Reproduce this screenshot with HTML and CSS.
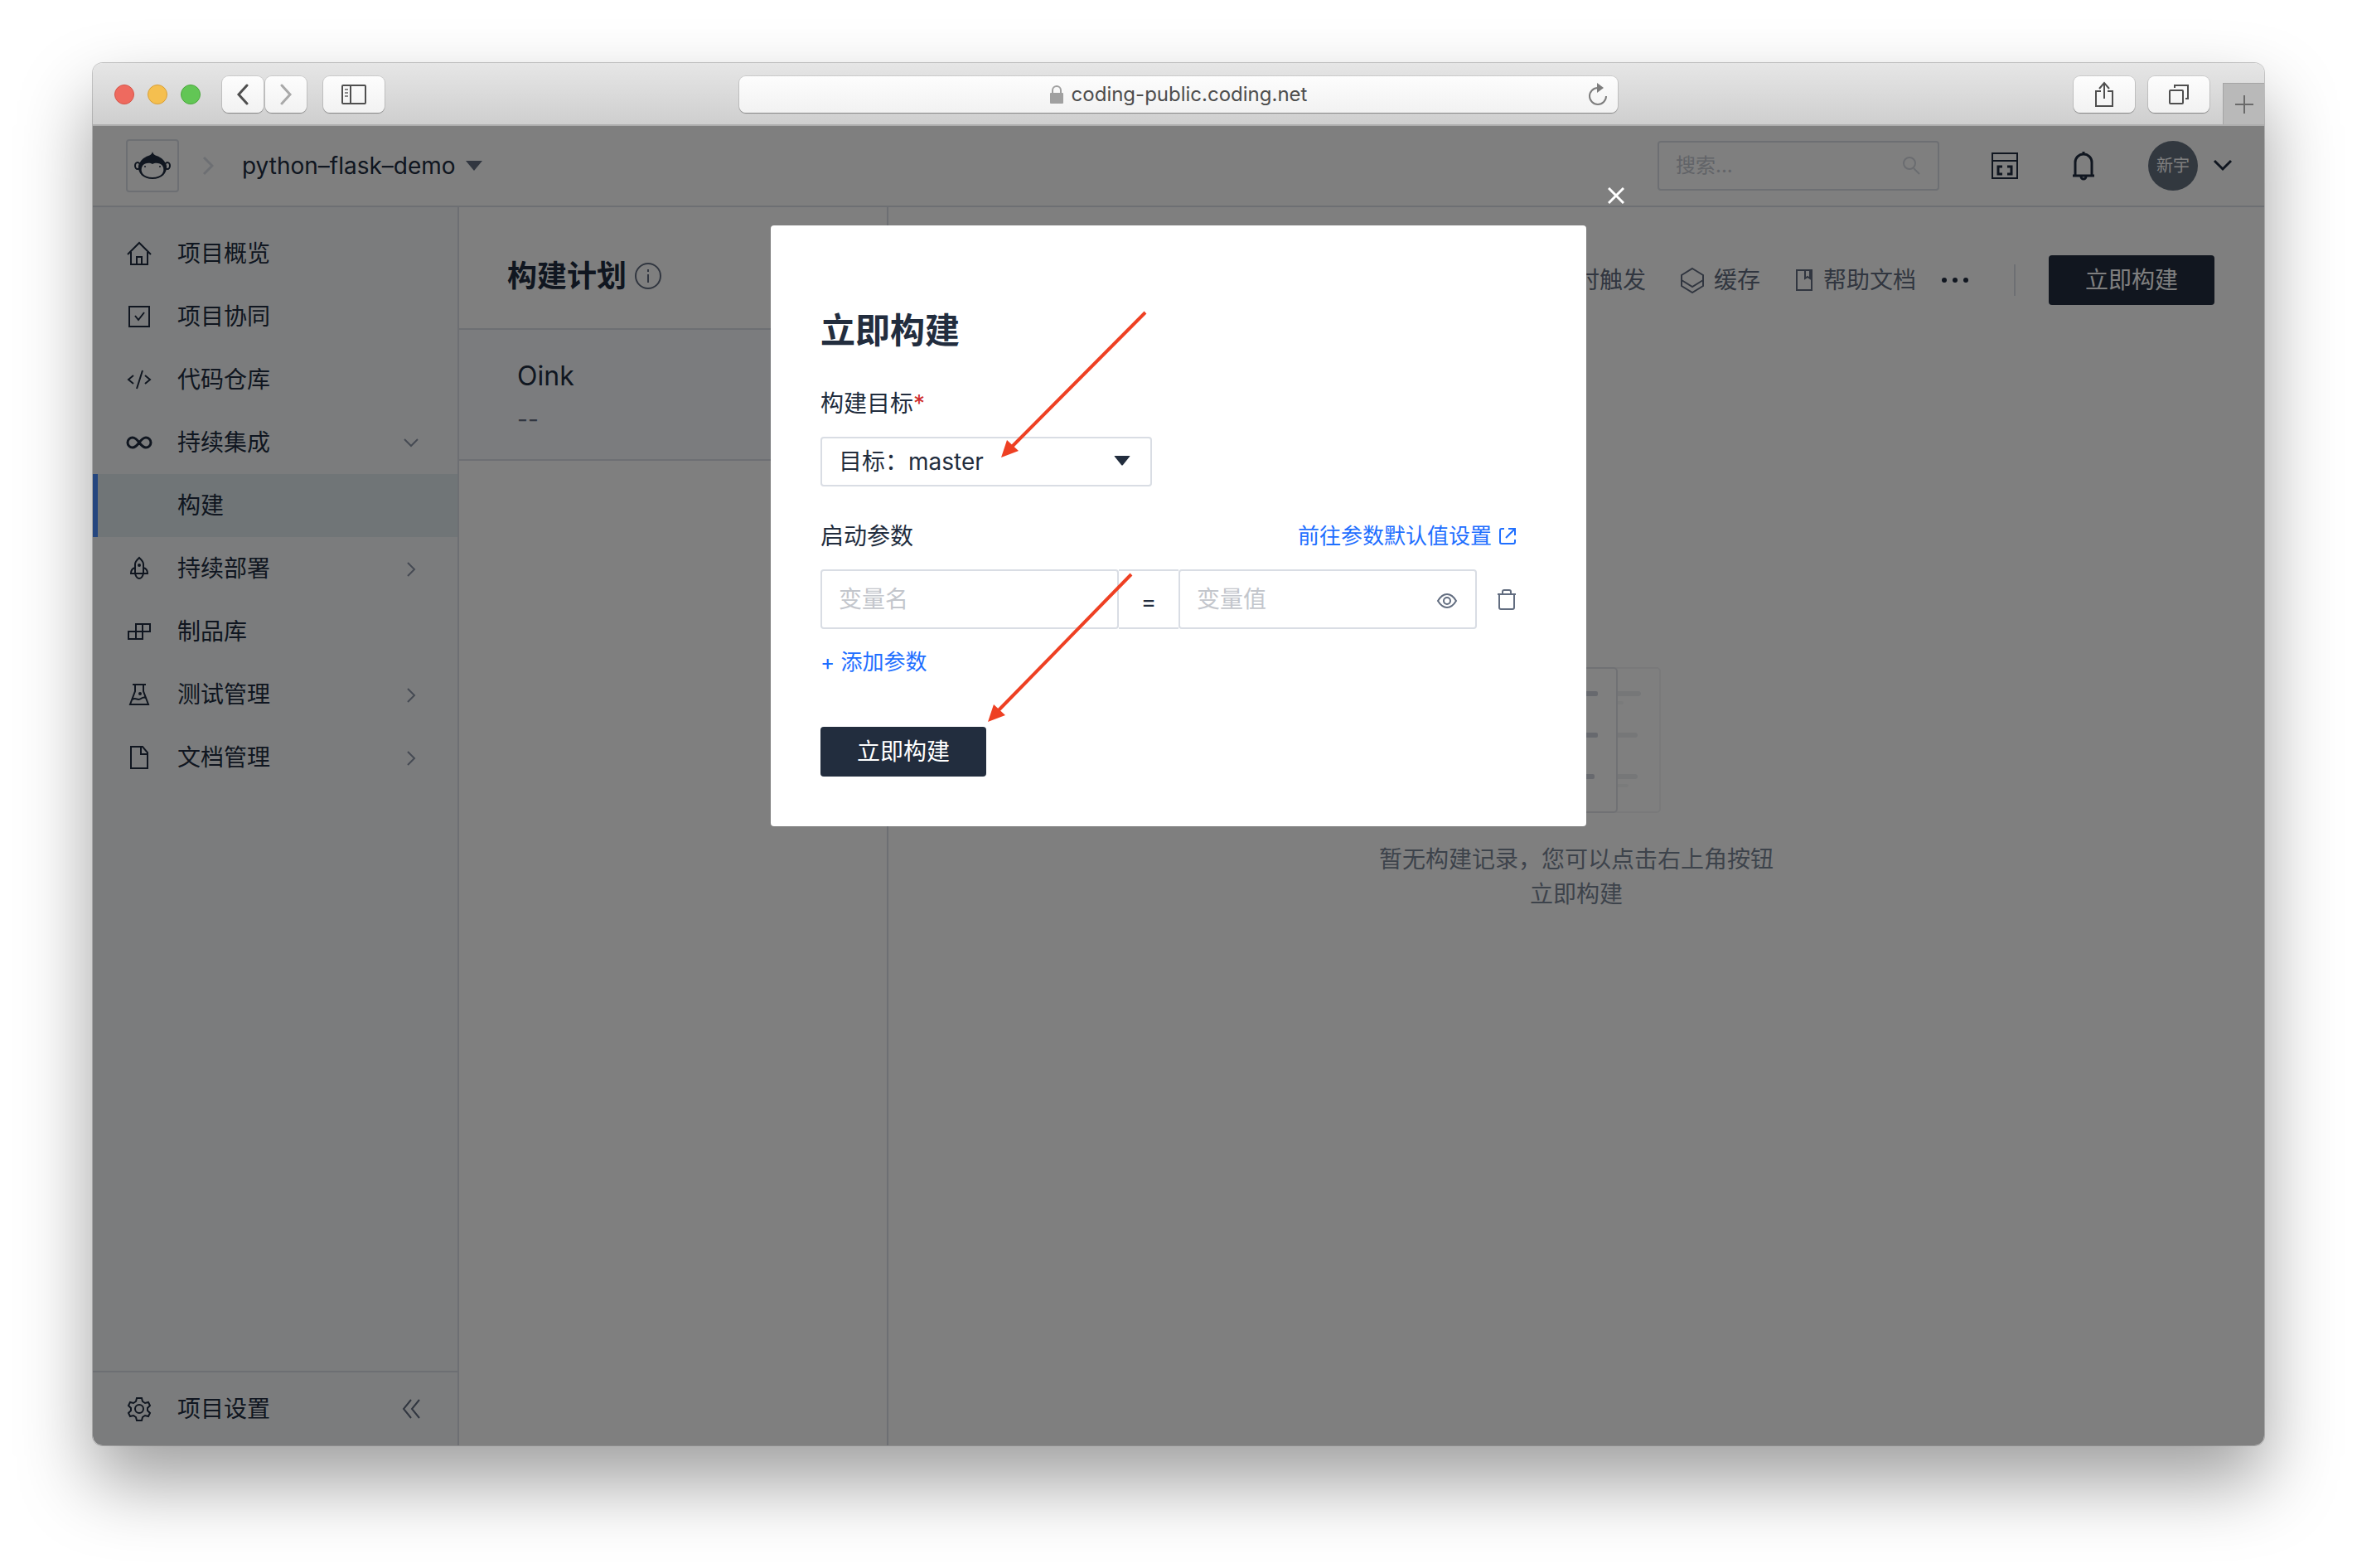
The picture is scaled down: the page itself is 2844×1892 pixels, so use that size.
FILE: index.html
```html
<!DOCTYPE html>
<html lang="zh-CN">
<head>
    <meta charset="UTF-8">
    <meta name="viewport" content="width=device-width, initial-scale=1.0">
    <title>立即构建</title>
    <link rel="stylesheet" href="styles.css">
</head>
<body>
    <div class="window">
        <div class="toolbar">
            <div class="toolbar-left">
                <span class="light red"></span>
                <span class="light yellow"></span>
                <span class="light green"></span>
                <div class="history">
                    <button type="button" class="tool" aria-label="Back">
                        <svg width="16" height="26" viewBox="0 0 16 26"><path d="M13 2L3 13l10 11" fill="none" stroke="#4f4f4f" stroke-width="3" stroke-linecap="round"/></svg>
                    </button>
                    <button type="button" class="tool" aria-label="Forward">
                        <svg width="16" height="26" viewBox="0 0 16 26"><path d="M3 2l10 11L3 24" fill="none" stroke="#a9a9a9" stroke-width="3" stroke-linecap="round"/></svg>
                    </button>
                </div>
                <button type="button" class="tool wide" aria-label="Sidebar">
                    <svg width="32" height="26" viewBox="0 0 32 26" fill="none" stroke="#4f4f4f" stroke-width="2"><rect x="2" y="2" width="28" height="22" rx="1"/><path d="M12 2v22"/><path d="M5 7h4M5 11h4M5 15h4" stroke="#8a8a8a"/></svg>
                </button>
            </div>
            <div class="address">
                <svg width="16" height="22" viewBox="0 0 16 22"><rect y="9" width="16" height="13" rx="1" fill="#a0a0a0"/><path d="M3 10V6a5 5 0 0 1 10 0v4" fill="none" stroke="#a0a0a0" stroke-width="2"/></svg>
                <span>coding-public.coding.net</span>
                <button type="button" class="reload" aria-label="Reload">
                    <svg width="24" height="28" viewBox="0 0 24 28"><path d="M12 6a10 10 0 1 0 10 10" fill="none" stroke="#7d7d7d" stroke-width="2"/><path d="M11 0l8 6-8 6z" fill="#7d7d7d"/></svg>
                </button>
            </div>
            <div class="toolbar-right">
                <button type="button" class="tool wide" aria-label="Share">
                    <svg width="24" height="32" viewBox="0 0 24 32" fill="none" stroke="#4f4f4f" stroke-width="2"><path d="M8 12H2v18h20V12h-6M12 21V3M6 9l6-7 6 7"/></svg>
                </button>
                <button type="button" class="tool wide" aria-label="Tabs">
                    <svg width="26" height="26" viewBox="0 0 26 26" fill="none" stroke="#4f4f4f" stroke-width="2"><rect x="2" y="8" width="16" height="16" rx="1"/><path d="M8 5V2h16v16h-3"/></svg>
                </button>
                <button type="button" class="new-tab" aria-label="New tab">
                    <svg width="22" height="22" viewBox="0 0 22 22"><path d="M11 0v22M0 11h22" stroke="#6a6a6a" stroke-width="2"/></svg>
                </button>
            </div>
        </div>

        <div class="app">
            <header class="header">
                <a href="#" class="logo" aria-label="CODING">
                    <svg width="44" height="34" viewBox="10 15 44 34">
                        <g fill="none" stroke="#202d40" stroke-width="2"><ellipse cx="14" cy="32" rx="3" ry="4"/><ellipse cx="50" cy="32" rx="3" ry="4"/></g>
                        <path fill="#202d40" d="M32 15c1 3 2 4 5 5 6 2 10 6 12 12 1 9-6 16-17 16s-18-7-17-16c2-6 6-10 12-12 3-1 4-2 5-5z"/>
                        <path fill="#fff" d="M32 30c3-2 9-2 12 2 4 7-1 14-12 14s-16-7-12-14c3-4 9-4 12-2z"/>
                        <circle cx="23" cy="33" r="1" fill="#202d40"/><circle cx="41" cy="33" r="1" fill="#202d40"/>
                    </svg>
                </a>
                <svg class="crumb" width="14" height="24" viewBox="0 0 14 24"><path d="M2 2l10 10L2 22" fill="none" stroke="#dadfe6" stroke-width="3"/></svg>
                <button type="button" class="project">python–flask–demo
                    <svg width="20" height="12" viewBox="0 0 20 12"><path d="M0 0h20L10 12z" fill="#626d80"/></svg>
                </button>
                <label class="search">
                    <input type="text" placeholder="搜索..." aria-label="搜索">
                    <svg width="24" height="24" viewBox="0 0 24 24" fill="none" stroke="#d5d9e0" stroke-width="2"><circle cx="10" cy="9" r="7"/><path d="M15 15l7 7"/></svg>
                </label>
                <button type="button" class="icon-button" aria-label="工作台">
                    <svg width="34" height="34" viewBox="0 0 34 34" fill="none" stroke="#202d40" stroke-width="2"><path d="M2 2h30v30H2zM2 11h30"/><path d="M14 18h-5v9h5M20 18h5v9h-5" stroke-width="3"/></svg>
                </button>
                <button type="button" class="icon-button" aria-label="通知">
                    <svg width="28" height="36" viewBox="0 0 28 36" fill="none" stroke="#202d40" stroke-width="3"><path d="M4 30V14a10 10 0 0 1 20 0v16M1 30h26M14 4V1M11 31a3 3 0 0 0 6 0"/></svg>
                </button>
                <button type="button" class="user">
                    <span class="avatar">新宇</span>
                    <svg width="24" height="16" viewBox="0 0 24 16"><path d="M2 2l10 10L22 2" fill="none" stroke="#202d40" stroke-width="3"/></svg>
                </button>
            </header>

            <div class="body">
                <aside class="sidebar">
                    <nav class="menu">
                        <a href="#" class="item">
                            <svg class="icon" viewBox="0 0 32 32"><path d="M2 17L16 3l14 14M6 14v15h20V14M13 29v-9h6v9"/></svg>
                            <span>项目概览</span>
                        </a>
                        <a href="#" class="item">
                            <svg class="icon" viewBox="0 0 32 32"><path d="M4 4h24v24H4zM11 15l4 5 7-9"/></svg>
                            <span>项目协同</span>
                        </a>
                        <a href="#" class="item">
                            <svg class="icon" viewBox="0 0 32 32"><path d="M9 11l-6 5 6 5M23 11l6 5-6 5M20 5l-7 22"/></svg>
                            <span>代码仓库</span>
                        </a>
                        <a href="#" class="item">
                            <svg class="icon" viewBox="0 0 32 32"><path stroke-width="3" d="M16 16c-3-4-5-6-8-6a6 6 0 0 0 0 12c3 0 5-2 8-6s5-6 8-6a6 6 0 0 1 0 12c-3 0-5-2-8-6z"/></svg>
                            <span>持续集成</span>
                            <svg class="arrow" viewBox="0 0 20 20"><path d="M2 6l8 8 8-8"/></svg>
                        </a>
                        <a href="#" class="item active"><span>构建</span></a>
                        <a href="#" class="item">
                            <svg class="icon" viewBox="0 0 32 32"><path d="M11 22V11c0-4 3-6 5-8 2 2 5 4 5 8v11zM11 15c-4 1-5 4-5 7h5M21 15c4 1 5 4 5 7h-5M11 22c1 4 3 6 5 6s4-2 5-6"/><circle cx="16" cy="12" r="1"/></svg>
                            <span>持续部署</span>
                            <svg class="arrow" viewBox="0 0 20 20"><path d="M6 3l8 8-8 8"/></svg>
                        </a>
                        <a href="#" class="item">
                            <svg class="icon" viewBox="0 0 32 32"><path d="M12 7h17v9H12zM3 16h17v9H3zM20 7v9M12 16v9"/></svg>
                            <span>制品库</span>
                        </a>
                        <a href="#" class="item">
                            <svg class="icon" viewBox="0 0 32 32"><path d="M8 4h16M11 4v8L5 28h22l-6-16V4M8 22c4-3 6 2 10-1 3-2 4-2 6-1"/><circle cx="17" cy="15" r="1"/></svg>
                            <span>测试管理</span>
                            <svg class="arrow" viewBox="0 0 20 20"><path d="M6 3l8 8-8 8"/></svg>
                        </a>
                        <a href="#" class="item">
                            <svg class="icon" viewBox="0 0 32 32"><path d="M6 3h14l6 7v19H6zM18 3v9h8"/></svg>
                            <span>文档管理</span>
                            <svg class="arrow" viewBox="0 0 20 20"><path d="M6 3l8 8-8 8"/></svg>
                        </a>
                    </nav>
                    <div class="settings">
                        <a href="#" class="item">
                            <svg class="icon" viewBox="0 0 32 32"><path d="M13 3h6l1 4 3 2 4-1 2 4-3 3v3l3 3-2 4-4-1-3 2-1 4h-6l-1-4-3-2-4 1-2-4 3-3v-3l-3-3 2-4 4 1 3-2z"/><circle cx="16" cy="16" r="5"/></svg>
                            <span>项目设置</span>
                        </a>
                        <button type="button" class="collapse" aria-label="收起">
                            <svg width="24" height="24" viewBox="0 0 24 24"><path d="M12 1L3 12l9 11M22 1l-9 11 9 11" fill="none" stroke="#626d80" stroke-width="2"/></svg>
                        </button>
                    </div>
                </aside>

                <section class="plans">
                    <div class="plans-head">
                        <h2>构建计划</h2>
                        <svg width="32" height="32" viewBox="0 0 32 32" fill="none" stroke="#626d80" stroke-width="2"><circle cx="16" cy="16" r="15"/><path d="M16 14v10M16 8v3"/></svg>
                    </div>
                    <a href="#" class="plan">
                        <span class="plan-name">Oink</span>
                        <span class="plan-state">--</span>
                    </a>
                </section>

                <main class="main">
                    <div class="actions">
                        <a href="#" class="action">
                            <svg width="28" height="32" viewBox="0 0 28 32" fill="none" stroke="#626d80" stroke-width="2"><circle cx="14" cy="16" r="12"/><path d="M14 9v7h6"/></svg>
                            定时触发
                        </a>
                        <a href="#" class="action">
                            <svg width="28" height="32" viewBox="0 0 28 32" fill="none" stroke="#626d80" stroke-width="2"><path d="M14 2l13 8v13l-13 8-13-8V10zM1 16l13 8 13-8"/></svg>
                            缓存
                        </a>
                        <a href="#" class="action">
                            <svg width="22" height="28" viewBox="0 0 22 28" fill="none" stroke="#626d80" stroke-width="2"><path d="M2 2h18v24H2zM12 2v10l3-2 3 2V2"/></svg>
                            帮助文档
                        </a>
                        <button type="button" class="more" aria-label="更多">
                            <svg width="34" height="8" viewBox="0 0 34 8" fill="#202d40"><circle cx="4" cy="4" r="3"/><circle cx="17" cy="4" r="3"/><circle cx="30" cy="4" r="3"/></svg>
                        </button>
                        <span class="divider"></span>
                        <button type="button" class="primary">立即构建</button>
                    </div>
                    <div class="empty">
                        <svg width="206" height="178" viewBox="0 0 206 178" fill="none">
                            <rect x="2" y="2" width="202" height="174" rx="4" stroke="#f2f3f5" stroke-width="2"/>
                            <g fill="#eceef1"><rect x="148" y="30" width="33" height="6" rx="3"/><rect x="148" y="80" width="29" height="6" rx="3"/><rect x="148" y="130" width="29" height="6" rx="3"/></g>
                            <g fill="#f5f6f7"><rect x="148" y="42" width="12" height="4" rx="2"/><rect x="148" y="142" width="18" height="4" rx="2"/></g>
                            <rect x="54" y="2" width="98" height="174" rx="4" fill="#fff" stroke="#e0e3e9" stroke-width="2"/>
                            <g fill="#cfd3dc"><rect x="76" y="30" width="53" height="6" rx="2"/><rect x="76" y="80" width="53" height="6" rx="2"/><rect x="76" y="130" width="49" height="6" rx="2"/></g>
                        </svg>
                        <p>暂无构建记录，您可以点击右上角按钮<br>立即构建</p>
                    </div>
                </main>
            </div>

            <div class="overlay">
                <form class="modal" role="dialog" aria-labelledby="title">
                    <button type="button" class="close" aria-label="关闭">
                        <svg width="20" height="20" viewBox="0 0 20 20"><path d="M1 1l18 18M19 1L1 19" stroke="#fff" stroke-width="3"/></svg>
                    </button>
                    <h1 id="title">立即构建</h1>

                    <label class="label" for="target">构建目标<span class="required">*</span></label>
                    <div class="select">
                        <select id="target">
                            <option>目标：master</option>
                        </select>
                        <svg width="20" height="12" viewBox="0 0 20 12"><path d="M1 0h18q1 0 0 1l-8 10q-1 1-2 0L1 1q-1-1 0-1z" fill="#222d3e"/></svg>
                    </div>

                    <div class="params-head">
                        <span class="label">启动参数</span>
                        <a href="#" class="link">前往参数默认值设置
                            <svg width="22" height="22" viewBox="0 0 22 22" fill="none" stroke="#1f6fff" stroke-width="2"><path d="M7 2H4a2 2 0 0 0-2 2v14a2 2 0 0 0 2 2h14a2 2 0 0 0 2-2v-3M12 2h8v8M20 2L9 13"/></svg>
                        </a>
                    </div>

                    <div class="params">
                        <input type="text" class="param" placeholder="变量名" aria-label="变量名">
                        <span class="equals">=</span>
                        <div class="value">
                            <input type="text" class="param" placeholder="变量值" aria-label="变量值">
                            <button type="button" class="eye" aria-label="显示">
                                <svg width="26" height="20" viewBox="0 0 26 20" fill="none" stroke="#626d80" stroke-width="2"><path d="M2 10c3-5 6-8 11-8s8 3 11 8c-3 5-6 8-11 8s-8-3-11-8z"/><circle cx="13" cy="10" r="4"/></svg>
                            </button>
                        </div>
                        <button type="button" class="trash" aria-label="删除">
                            <svg width="24" height="26" viewBox="0 0 24 26" fill="none" stroke="#626d80" stroke-width="2"><path d="M1 7h22M7 7V4a2 2 0 0 1 2-2h6a2 2 0 0 1 2 2v3M3 7v16a2 2 0 0 0 2 2h14a2 2 0 0 0 2-2V7"/></svg>
                        </button>
                    </div>

                    <a href="#" class="link add">+ 添加参数</a>
                    <button type="submit" class="primary">立即构建</button>

                    <!-- arrows pointing at the target and the submit button -->
                    <svg class="arrows" width="984" height="725" viewBox="0 0 984 725" fill="#ee4023" stroke="#ee4023">
                        <path d="M452 105L288 270M435 421L272 588" stroke-width="4"/>
                        <path d="M278 280l7-21 14 13zM262 599l7-21 14 13z" stroke="none"/>
                    </svg>
                </form>
            </div>
        </div>
    </div>
</body>
</html>
```

FILE: styles.css
```css
* {
    box-sizing: border-box;
}
body {
    margin: 0;
    min-height: 100vh;
    padding: 76px 112px 148px;
    display: flex;
    background: #fff;
    color: #202d40;
    font-family: Inter, "Noto Sans CJK SC", sans-serif;
    font-size: 28px;
    line-height: 40px;
}
button,
input,
select {
    font: inherit;
    color: inherit;
}
button {
    border: none;
    padding: 0;
    background: none;
    cursor: pointer;
}
a {
    color: inherit;
    text-decoration: none;
}
h1,
h2,
p {
    margin: 0;
}
svg {
    display: block;
    flex: none;
}

/* browser window */
.window {
    flex: 1;
    display: flex;
    flex-direction: column;
    border-radius: 12px;
    overflow: hidden;
    box-shadow: 0 0 0 1px rgba(0, 0, 0, 0.2), 0 44px 88px rgba(0, 0, 0, 0.38);
}
.toolbar {
    height: 76px;
    display: grid;
    grid-template-columns: 1fr minmax(0, 1060px) 1fr;
    align-items: center;
    background: linear-gradient(#e6e6e6, #cecece);
    box-shadow: inset 0 -2px #adadad;
}
.toolbar-left,
.toolbar-right {
    height: 100%;
    display: flex;
    align-items: center;
    gap: 16px;
}
.toolbar-left {
    padding-left: 26px;
}
.toolbar-right {
    justify-content: flex-end;
}
.light {
    width: 24px;
    height: 24px;
    border-radius: 50%;
}
.red {
    background: #ee6a5f;
    border: 1px solid #d65549;
}
.yellow {
    background: #f5bf4f;
    border: 1px solid #d8a03a;
}
.green {
    background: #62c655;
    border: 1px solid #4ca93f;
}
.history {
    display: flex;
    gap: 2px;
    margin: 0 4px 0 10px;
}
.tool {
    width: 50px;
    height: 44px;
    display: flex;
    align-items: center;
    justify-content: center;
    border-radius: 8px;
    background: linear-gradient(#fdfdfd, #f2f2f2);
    box-shadow: 0 0 0 1px rgba(0, 0, 0, 0.1), 0 1px 1px rgba(0, 0, 0, 0.3);
}
.tool.wide {
    width: 74px;
}
.address {
    position: relative;
    height: 44px;
    display: flex;
    align-items: center;
    justify-content: center;
    gap: 10px;
    border-radius: 8px;
    background: linear-gradient(#fdfdfd, #f2f2f2);
    box-shadow: 0 0 0 1px rgba(0, 0, 0, 0.1), 0 1px 1px rgba(0, 0, 0, 0.3);
    color: #4d4d4d;
    font-size: 24px;
}
.reload {
    position: absolute;
    right: 12px;
    top: 8px;
}
.new-tab {
    width: 50px;
    height: 50px;
    align-self: flex-end;
    display: flex;
    align-items: center;
    justify-content: center;
    margin-bottom: 2px;
    background: #b9b9b9;
    border-left: 1px solid #a5a5a5;
    border-top: 1px solid #a5a5a5;
}

/* app */
.app {
    position: relative;
    flex: 1;
    display: flex;
    flex-direction: column;
    background: #fff;
}
.header {
    height: 98px;
    display: flex;
    align-items: center;
    padding: 0 38px 0 40px;
    border-bottom: 2px solid #dadfe6;
}
.logo {
    width: 64px;
    height: 64px;
    display: flex;
    align-items: center;
    justify-content: center;
    border: 2px solid #dadfe6;
    border-radius: 4px;
}
.crumb {
    margin: 0 34px 0 28px;
}
.project {
    display: flex;
    align-items: center;
    gap: 12px;
}
.search {
    width: 340px;
    height: 60px;
    display: flex;
    align-items: center;
    margin-left: auto;
    padding: 0 20px;
    border: 2px solid #dadfe6;
    border-radius: 4px;
}
.search input {
    flex: 1;
    min-width: 0;
    padding: 0;
    border: none;
    outline: none;
    background: none;
    font-size: 24px;
}
.search input::placeholder {
    color: #c4c8d0;
}
.icon-button {
    margin-left: 62px;
}
.icon-button + .icon-button {
    margin-left: 64px;
}
.user {
    display: flex;
    align-items: center;
    gap: 18px;
    margin-left: 64px;
}
.avatar {
    width: 60px;
    height: 60px;
    border-radius: 50%;
    background: #64707f;
    color: #fff;
    font-size: 20px;
    line-height: 60px;
    text-align: center;
}
.body {
    flex: 1;
    display: flex;
}

/* sidebar */
.sidebar {
    width: 442px;
    display: flex;
    flex-direction: column;
    background: #f7f9fb;
    border-right: 2px solid #dadfe6;
}
.menu {
    flex: 1;
    padding-top: 18px;
}
.item {
    height: 76px;
    display: flex;
    align-items: center;
    gap: 30px;
    padding: 0 46px 0 40px;
}
.item.active {
    padding-left: 96px;
    border-left: 6px solid #4a8dff;
    background: #e1eaee;
}
.icon {
    width: 32px;
    height: 32px;
    fill: none;
    stroke: #202d40;
    stroke-width: 2;
}
.arrow {
    width: 20px;
    height: 20px;
    margin-left: auto;
    fill: none;
    stroke: #8b95a6;
    stroke-width: 2;
}
.settings {
    height: 90px;
    display: flex;
    align-items: center;
    justify-content: space-between;
    border-top: 2px solid #dadfe6;
}
.collapse {
    margin-right: 44px;
}

/* build plans */
.plans {
    width: 518px;
    border-right: 2px solid #dadfe6;
}
.plans-head {
    height: 148px;
    display: flex;
    align-items: center;
    gap: 10px;
    padding: 20px 58px 0;
    border-bottom: 2px solid #dadfe6;
}
.plans-head h2 {
    font-size: 36px;
    line-height: 52px;
}
.plan {
    height: 158px;
    display: flex;
    flex-direction: column;
    gap: 12px;
    padding: 36px 70px;
    background: #f7f9fc;
    border-bottom: 2px solid #dadfe6;
}
.plan-name {
    font-size: 32px;
}
.plan-state {
    color: #626d80;
}

/* build records */
.main {
    flex: 1;
    padding: 58px 60px;
}
.actions {
    display: flex;
    align-items: center;
    justify-content: flex-end;
    color: #626d80;
}
.action {
    display: flex;
    align-items: center;
    gap: 12px;
    margin-right: 42px;
}
.more {
    margin-left: -12px;
}
.divider {
    width: 2px;
    height: 38px;
    margin: 0 40px 0 54px;
    background: #dadfe6;
}
.primary {
    width: 200px;
    height: 60px;
    border-radius: 4px;
    background: #222d3e;
    color: #fff;
}
.empty {
    display: flex;
    flex-direction: column;
    align-items: center;
    gap: 34px;
    margin-top: 436px;
    color: #7b8697;
    line-height: 42px;
    text-align: center;
}

/* modal */
.overlay {
    position: absolute;
    inset: 0;
    padding-top: 120px;
    background: rgba(0, 0, 0, 0.5);
}
.modal {
    position: relative;
    width: 984px;
    margin: 0 auto;
    padding: 97px 84px 60px 60px;
    border-radius: 4px;
    background: #fff;
    color: #222d3e;
}
.modal h1 {
    margin-bottom: 38px;
    font-size: 42px;
    line-height: 60px;
}
.close {
    position: absolute;
    top: -46px;
    right: -46px;
}
.label {
    display: block;
}
.required {
    color: #cf2d2d;
}
.select {
    position: relative;
    width: 400px;
    margin: 20px 0 40px;
}
.select select {
    width: 100%;
    height: 60px;
    padding: 0 20px;
    appearance: none;
    border: 2px solid #d9dde4;
    border-radius: 4px;
    background: #fff;
}
.select svg {
    position: absolute;
    right: 26px;
    top: 23px;
    pointer-events: none;
}
.params-head {
    display: flex;
    align-items: center;
    justify-content: space-between;
}
.link {
    display: flex;
    align-items: center;
    gap: 8px;
    color: #1f6fff;
    font-size: 26px;
}
.params {
    display: flex;
    align-items: center;
    margin: 20px 0;
}
.param {
    width: 360px;
    height: 72px;
    padding: 0 20px;
    border: 2px solid #d9dde4;
    border-radius: 4px;
    outline: none;
}
.param::placeholder {
    color: #c3c6cc;
}
.equals {
    flex: 1;
    height: 72px;
    border: solid #d9dde4;
    border-width: 2px 0;
    line-height: 74px;
    text-align: center;
}
.value {
    position: relative;
}
.eye {
    position: absolute;
    right: 23px;
    top: 28px;
}
.trash {
    margin-left: 24px;
}
.add {
    margin-bottom: 58px;
}
.arrows {
    position: absolute;
    left: 0;
    top: 0;
    pointer-events: none;
}
```
